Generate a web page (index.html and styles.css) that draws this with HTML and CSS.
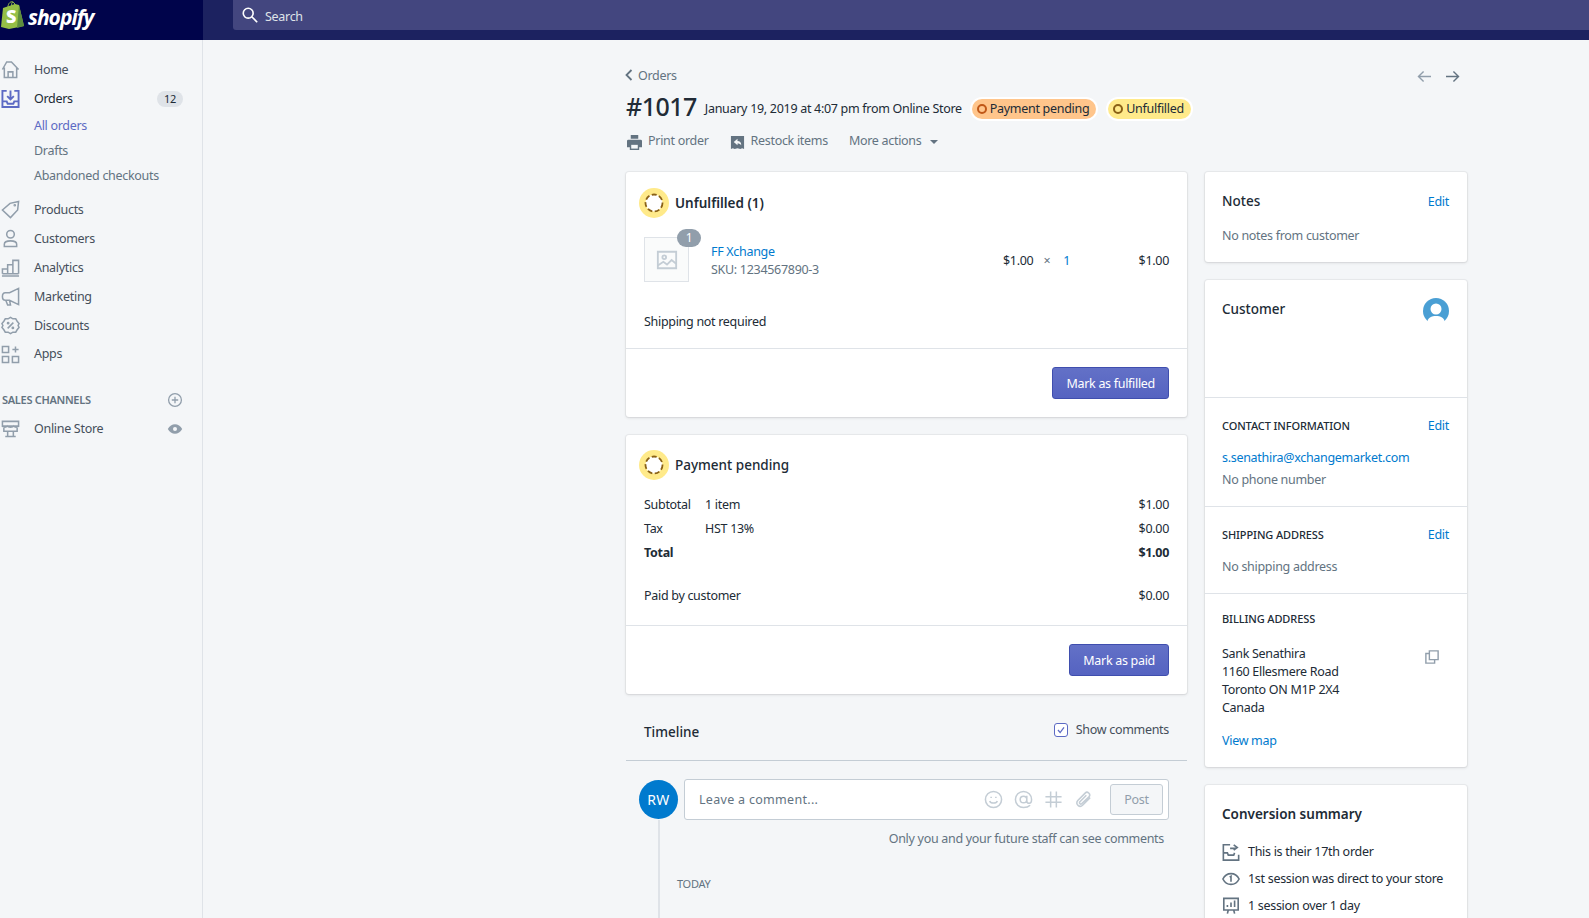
FILE: index.html
```html
<!DOCTYPE html>
<html lang="en">
<head>
  <meta charset="UTF-8" />
  <title>Order #1017</title>
  <link rel="stylesheet" href="styles.css">
</head>
<body>
  <header class="topbar">
    <div class="brand">
      <svg class="bag" viewBox="0 0 24 28">
        <path d="M2 7 L14 3 L18 4 L23 25 L8 28 L0 26 Z" fill="#95bf47"/>
        <path d="M18 4 L23 25 L16 27 Z" fill="#5e8e3e"/>
        <path d="M7 6 C7 2 10 0 12 1 C14 2 14 4 14 6 M11 6 C10 3 11 1 12 1" fill="none" stroke="#95bf47" stroke-width="1"/>
        <text x="5" y="22" class="bag-letter">S</text>
      </svg>
      <span class="wordmark">shopify</span>
    </div>
    <div class="search">
      <svg class="search-icon" viewBox="0 0 20 20"><circle cx="8" cy="8" r="5.5"/><path d="M12 12l6 6"/></svg>
      <span>Search</span>
    </div>
  </header>

  <div class="layout">
    <nav class="sidebar">
      <a class="nav-item">
        <svg class="icon" viewBox="0 0 20 20"><path d="M1.500 10 L6 2h5l7.500 8M3.500 8v10.500h13V8M7.500 18.500v-6h5v6"/></svg>
        Home
      </a>
      <a class="nav-item active">
        <svg class="icon" viewBox="0 0 20 20"><path d="M6 2H1.500v17h17V2H14M1.500 13H6l1 2.500h6l1-2.500h4.500M10 1.500v9M6.500 7.500l3.500 3.500 3.500-3.500"/></svg>
        Orders
        <span class="count">12</span>
      </a>
      <div class="sub-list">
        <a class="sub-item current">All orders</a>
        <a class="sub-item">Drafts</a>
        <a class="sub-item">Abandoned checkouts</a>
      </div>
      <a class="nav-item">
        <svg class="icon" viewBox="0 0 20 20"><path d="M1.500 10.500 L9.500 3.500 L18.500 1.500 L17.500 10.500 L10 18.500Z"/><circle cx="14.500" cy="5.500" r=".6"/></svg>
        Products
      </a>
      <a class="nav-item">
        <svg class="icon" viewBox="0 0 20 20"><circle cx="10" cy="5.500" r="4"/><path d="M3.500 18.500v-2.500c0-2 2-3.500 6.500-3.500s6.500 1.500 6.500 3.500v2.500z"/></svg>
        Customers
      </a>
      <a class="nav-item">
        <svg class="icon" viewBox="0 0 20 20"><path d="M1 19h18M1.500 16.500v-5h5.500v5M7 16.500V7h5.500v9.500M12.500 16.500V2.500h6v14M1.500 16.500h17"/></svg>
        Analytics
      </a>
      <a class="nav-item">
        <svg class="icon" viewBox="0 0 20 20"><path d="M18.500 1.500v17L9 14H4.500C2.500 14 1.500 12 1.500 10s1-4 3-4H9zM5 14l2 5h3l-1-5"/></svg>
        Marketing
      </a>
      <a class="nav-item">
        <svg class="icon" viewBox="0 0 20 20"><path d="M10 1.500l2.500 1.500 3 0 1.500 2.500 2 2.500-1 2 1 2-2 2.500-1.500 2.500-3 0-2.500 1.500-2.500-1.500-3 0L3 14.500 1 12l1-2-1-2 2-2.500L4.500 3l3 0z"/><path d="M7 13l6-6"/><circle cx="7.500" cy="7.500" r=".7"/><circle cx="12.500" cy="12.500" r=".7"/></svg>
        Discounts
      </a>
      <a class="nav-item apps">
        <svg class="icon" viewBox="0 0 20 20"><path d="M1.500 1.500h6.500v6.500H1.500zM1.500 12h6.500v6.500H1.500zM12 12h6.500v6.500H12zM15.250 1.500v6.500M12 4.750h6.500"/></svg>
        Apps
      </a>
      <div class="channels">
        <span>SALES CHANNELS</span>
        <svg class="side-icon" viewBox="0 0 20 20"><circle cx="10" cy="10" r="8"/><path d="M10 6v8M6 10h8"/></svg>
      </div>
      <a class="nav-item">
        <svg class="icon" viewBox="0 0 20 20"><path d="M1.500 2.500h17v5h-17zM3 7.500V13h14V7.500M1.500 7.500c1 1.500 4 1.500 5 0 1 1.500 6 1.500 7 0 1 1.500 4 1.500 5 0M7 13v5.500h6V13M4.500 18.500h11"/></svg>
        Online Store
        <svg class="side-icon eye" viewBox="0 0 20 20"><path d="M1 10c2-4 5.500-6 9-6s7 2 9 6c-2 4-5.500 6-9 6s-7-2-9-6z"/><circle cx="10" cy="10" r="2.500" fill="#f4f6f8" stroke="none"/></svg>
      </a>
    </nav>

    <main class="main">
      <div class="page-head">
        <div class="crumb-row">
          <a class="crumb">
            <svg class="chevron" viewBox="0 0 8 12"><path d="M6.500 1L1.500 6l5 5"/></svg>
            Orders
          </a>
          <div class="pager">
            <svg class="arrow off" viewBox="0 0 16 14"><path d="M15 7H1.500M7 1.500L1.500 7 7 12.500"/></svg>
            <svg class="arrow" viewBox="0 0 16 14"><path d="M1 7h13.500M9 1.500L14.500 7 9 12.500"/></svg>
          </div>
        </div>
        <div class="title-row">
          <h1>#1017</h1>
          <span class="when">January 19, 2019 at 4:07 pm from Online Store</span>
          <span class="badge orange"><i></i>Payment pending</span>
          <span class="badge yellow"><i></i>Unfulfilled</span>
        </div>
        <div class="actions">
          <a class="action print">
            <svg viewBox="0 0 16 16"><path d="M4 0h8v4H4zM1.500 5h13A1.500 1.500 0 0 1 16 6.500V13h-3v3H3v-3H0V6.500A1.500 1.500 0 0 1 1.500 5z"/><path d="M4.500 10.500h7V14.500h-7z" fill="#f4f6f8"/></svg>
            Print order
          </a>
          <a class="action restock">
            <svg viewBox="0 0 16 16"><path d="M1 1h14v14l-2-1-2 1-3-1-3 1-2-1-2 1z"/><path d="M8 4L4 7.500 8 11V9c2 0 3 .5 4 2 0-3-1.500-4.500-4-4.500z" fill="#f4f6f8"/></svg>
            Restock items
          </a>
          <a class="action more">More actions <b class="caret"></b></a>
        </div>
      </div>

      <div class="columns">
        <div class="col-left">
          <section class="card">
            <div class="status-head first">
              <span class="ring"><svg viewBox="0 0 20 20"><circle cx="10" cy="10" r="8.500"/></svg></span>
              <h2>Unfulfilled (1)</h2>
            </div>
            <div class="line-item">
              <div class="thumb">
                <svg viewBox="0 0 24 24"><path d="M2 3h20v18H2z"/><circle cx="9" cy="9" r="2"/><path d="M2 18l6-4 4 3 5-5 5 4"/></svg>
                <span class="qty">1</span>
              </div>
              <div class="item-name">
                <a class="link">FF Xchange</a>
                <span class="muted">SKU: 1234567890-3</span>
              </div>
              <div class="item-price">$1.00 <span class="times">×</span> <a class="link">1</a></div>
              <div class="item-total">$1.00</div>
            </div>
            <p class="shipping-note">Shipping not required</p>
            <div class="card-foot"><button class="primary">Mark as fulfilled</button></div>
          </section>

          <section class="card">
            <div class="status-head second">
              <span class="ring"><svg viewBox="0 0 20 20"><circle cx="10" cy="10" r="8.500"/></svg></span>
              <h2 class="plain">Payment pending</h2>
            </div>
            <div class="totals">
              <div class="total-row"><span class="label">Subtotal</span><span class="detail">1 item</span><span>$1.00</span></div>
              <div class="total-row"><span class="label">Tax</span><span class="detail">HST 13%</span><span>$0.00</span></div>
              <div class="total-row strong"><span class="label">Total</span><span class="detail"></span><span>$1.00</span></div>
              <div class="total-row paid"><span class="label wide">Paid by customer</span><span>$0.00</span></div>
            </div>
            <div class="card-foot"><button class="primary">Mark as paid</button></div>
          </section>

          <section class="timeline">
            <div class="timeline-head">
              <h2 class="plain">Timeline</h2>
              <label class="show-comments">
                <span class="check"><svg viewBox="0 0 14 14"><path d="M3.500 7l2.500 3 4.500-6"/></svg></span>
                Show comments
              </label>
            </div>
            <div class="comment-row">
              <span class="avatar">RW</span>
              <div class="comment-box">
                <span class="placeholder">Leave a comment...</span>
                <svg class="tool" viewBox="0 0 20 20"><circle cx="10" cy="10" r="8.500"/><path d="M6 11.500c1 3 7 3 8 0M7.500 7v1.500M12.500 7v1.500"/></svg>
                <svg class="tool" viewBox="0 0 20 20"><path d="M17 16c-2 2-4 2.500-7 2.500a8.500 8.500 0 1 1 8.500-8.500c0 2.500-1 4-2.500 4s-2.500-1-2.500-2.500V6M13.500 10a3.500 3.500 0 1 1-7 0 3.500 3.500 0 0 1 7 0z"/></svg>
                <svg class="tool" viewBox="0 0 20 20"><path d="M7 1.500v17M13 1.500v17M1.500 7h17M1.500 13h17"/></svg>
                <svg class="tool" viewBox="0 0 20 20"><path d="M17 8l-8 8c-3 3-8-1-5-5l8-8c2-2 6 1 4 4l-8 7.500c-1 1-3-.5-2-2l7-7"/></svg>
                <button class="post">Post</button>
              </div>
            </div>
            <div class="events">
              <p class="comment-note">Only you and your future staff can see comments</p>
              <p class="day">TODAY</p>
            </div>
          </section>
        </div>

        <div class="col-right">
          <section class="card notes">
            <div class="side-title">
              <h2 class="plain">Notes</h2>
              <a class="link edit-low">Edit</a>
            </div>
            <p class="muted notes-text">No notes from customer</p>
          </section>

          <section class="card">
            <div class="cust-top">
              <h2 class="plain">Customer</h2>
              <svg class="cust-avatar" viewBox="0 0 26 26"><circle cx="13" cy="13" r="13" fill="#4a9fd4"/><circle cx="13" cy="11" r="5.500" fill="#fff"/><path d="M4 26c0-7 5-8 9-8s9 1 9 8z" fill="#fff"/></svg>
            </div>
            <div class="cust-section contact">
              <div class="sec-head"><h3>CONTACT INFORMATION</h3><a class="link">Edit</a></div>
              <a class="link email">s.senathira@xchangemarket.com</a>
              <p class="muted phone">No phone number</p>
            </div>
            <div class="cust-section shipping">
              <div class="sec-head"><h3>SHIPPING ADDRESS</h3><a class="link">Edit</a></div>
              <p class="muted email">No shipping address</p>
            </div>
            <div class="cust-section billing">
              <div class="sec-head"><h3>BILLING ADDRESS</h3></div>
              <div class="address">
                <p>Sank Senathira<br>1160 Ellesmere Road<br>Toronto ON M1P 2X4<br>Canada</p>
                <svg class="copy" viewBox="0 0 16 16"><path d="M5 1h10v10H5z"/><path d="M5 4H1v11h10v-4"/></svg>
              </div>
              <a class="link view-map">View map</a>
            </div>
          </section>

          <section class="card summary">
            <h2 class="summary-title">Conversion summary</h2>
            <div class="summary-row">
              <svg viewBox="0 0 20 20"><path d="M9 2H1.500v17h17v-6M1.500 11H6l1 2.500h6l1-2.500M9 6h7M13 2l4 3-4 3"/></svg>
              This is their 17th order
            </div>
            <div class="summary-row">
              <svg viewBox="0 0 20 20"><path d="M1 10c2-4 5.500-6 9-6s7 2 9 6c-2 4-5.500 6-9 6s-7-2-9-6z"/><path d="M8.500 8l1.500-1v6"/></svg>
              1st session was direct to your store
            </div>
            <div class="summary-row">
              <svg viewBox="0 0 20 20"><path d="M2 1.500h16v13H2zM6 18.500l1-4M14 18.500l-1-4M6 11V9M10 11V6M14 11V4"/></svg>
              1 session over 1 day
            </div>
          </section>
        </div>
      </div>
    </main>
  </div>
</body>
</html>
```

FILE: styles.css
```css
* {
  box-sizing: border-box;
}

html, body {
  height: 100%;
  margin: 0;
  overflow: hidden;
}

body {
  font-family: "Noto Sans", sans-serif;
  font-size: 12.5px;
  letter-spacing: -0.3px;
  line-height: 18px;
  color: #212b36;
  background-color: #f4f6f8;
}

h1, h2, h3, p {
  margin: 0;
}

.topbar {
  display: flex;
  height: 40px;
  background-color: #1c2260;
}

.brand {
  display: flex;
  align-items: center;
  width: 203px;
  padding-bottom: 10px;
  background-color: #00044b;
}

.bag {
  width: 24px;
  height: 28px;
  margin-left: 1px;
}

.bag-letter {
  font-family: "Open Sans", sans-serif;
  font-size: 18px;
  font-weight: 800;
  fill: #fff;
}

.wordmark {
  margin-left: 3px;
  margin-top: 3px;
  font-family: "Open Sans", sans-serif;
  font-size: 21px;
  font-weight: 700;
  font-style: italic;
  letter-spacing: -1px;
  color: #fff;
}

.search {
  display: flex;
  align-items: center;
  flex: 1;
  height: 30px;
  margin-left: 30px;
  padding: 4px 0 0 8px;
  color: #dfe3e8;
  background-color: #43467f;
  border-radius: 0 0 0 3px;
}

.search-icon {
  width: 18px;
  height: 18px;
  margin: -4px 6px 0 0;
  fill: none;
  stroke: #fff;
  stroke-width: 1.8;
}

.layout {
  display: flex;
  height: calc(100% - 40px);
}

.sidebar {
  flex: none;
  width: 203px;
  padding-top: 15px;
  border-right: 1px solid #dfe3e8;
}

.nav-item {
  display: flex;
  align-items: center;
  height: 29px;
  padding-right: 19px;
  color: #454f5b;
}

.icon {
  flex: none;
  width: 19px;
  height: 19px;
  margin: 0 14px 0 1px;
  fill: none;
  stroke: #919eab;
  stroke-width: 1.6;
}

.active {
  color: #212b36;
}

.active .icon {
  stroke: #5c6ac4;
  stroke-width: 2;
}

.count {
  margin-left: auto;
  padding: 0 7px;
  font-size: 11px;
  line-height: 16px;
  background-color: #dfe3e8;
  border-radius: 8px;
}

.sub-list {
  margin-bottom: 7px;
}

.sub-item {
  display: block;
  height: 25px;
  padding-left: 34px;
  line-height: 25px;
  color: #637381;
}

.current {
  color: #5c6ac4;
}

.apps {
  height: 28px;
}

.channels {
  display: flex;
  align-items: center;
  justify-content: space-between;
  height: 18px;
  margin-top: 23px;
  margin-bottom: 5px;
  padding: 0 19px 0 2px;
  font-size: 11px;
  font-weight: 600;
  color: #637381;
}

.side-icon {
  width: 16px;
  height: 16px;
  fill: none;
  stroke: #919eab;
  stroke-width: 1.6;
}

.nav-item .side-icon {
  margin-left: auto;
}

.eye {
  fill: #919eab;
  stroke: none;
}

.main {
  flex: 1;
  padding-left: 423px;
}

.page-head {
  width: 842px;
}

.crumb-row {
  display: flex;
  align-items: center;
  justify-content: space-between;
  height: 18px;
  margin-top: 26px;
  padding-right: 8px;
}

.crumb {
  display: flex;
  align-items: center;
  margin-top: 2px;
  color: #637381;
}

.chevron {
  width: 8px;
  height: 12px;
  margin-right: 5px;
  margin-left: -1px;
  margin-top: -3px;
  fill: none;
  stroke: #637381;
  stroke-width: 1.8;
}

.pager {
  display: flex;
  gap: 13px;
  margin-top: 2px;
}

.arrow {
  width: 15px;
  height: 13px;
  fill: none;
  stroke: #637381;
  stroke-width: 1.5;
}

.off {
  stroke: #919eab;
}

.title-row {
  display: flex;
  align-items: center;
  height: 32px;
  margin-top: 6px;
}

h1 {
  font-size: 25px;
  font-weight: 500;
  line-height: 32px;
  letter-spacing: -0.5px;
}

.when {
  margin-left: 8px;
  margin-top: 6px;
}

.badge {
  display: flex;
  align-items: center;
  height: 20px;
  margin-left: 10px;
  margin-top: 6px;
  padding: 0 7px 0 5px;
  border-radius: 10px;
  box-shadow: 0 0 0 2px #fff;
}

.badge i {
  width: 10px;
  height: 10px;
  margin-right: 3px;
  border: 2px solid;
  border-radius: 50%;
}

.orange {
  background-color: #ffc58b;
}

.orange i {
  border-color: #c05717;
}

.yellow {
  margin-left: 12px;
  background-color: #ffea8a;
}

.yellow i {
  border-color: #8a6116;
}

.actions {
  display: flex;
  align-items: center;
  height: 18px;
  margin-top: 10px;
  color: #637381;
}

.action {
  display: flex;
  align-items: center;
}

.action svg {
  width: 15px;
  height: 15px;
  margin: 2px 6px 0 0;
  fill: #637381;
}

.print {
  margin-left: 1px;
}

.restock {
  margin-left: 21px;
}

.more {
  margin-left: 21px;
}

.caret {
  width: 0;
  height: 0;
  margin-top: 2px;
  margin-left: 9px;
  border: 4px solid transparent;
  border-top-color: #637381;
  border-bottom: 0;
}

.columns {
  display: flex;
  gap: 18px;
  width: 842px;
  margin-top: 22px;
}

.col-left {
  flex: none;
  width: 561px;
}

.col-right {
  flex: none;
  width: 262px;
}

.card {
  margin-bottom: 18px;
  background-color: #fff;
  border-radius: 3px;
  box-shadow: 0 0 0 1px rgba(63, 63, 68, 0.05), 0 1px 3px 0 rgba(63, 63, 68, 0.15);
}

.status-head {
  display: flex;
  align-items: center;
  padding-left: 13px;
}

.first {
  padding-top: 16px;
}

.second {
  padding-top: 15px;
}

.ring {
  display: flex;
  align-items: center;
  justify-content: center;
  width: 30px;
  height: 30px;
  margin-right: 6px;
  background-color: #ffea8a;
  border-radius: 50%;
}

.ring svg {
  width: 20px;
  height: 20px;
  fill: #fff;
  stroke: #8a6116;
  stroke-width: 1.8;
  stroke-dasharray: 5 2.500;
}

h2 {
  font-size: 13.5px;
  font-weight: 600;
  line-height: 20px;
  letter-spacing: 0;
}

.plain {
  font-weight: 500;
}

.line-item {
  display: flex;
  align-items: center;
  margin-top: 19px;
  padding: 0 18px;
}

.thumb {
  position: relative;
  display: flex;
  align-items: center;
  justify-content: center;
  width: 45px;
  height: 45px;
  background-color: #fafbfb;
  border: 1px solid #dfe3e8;
}

.thumb svg {
  width: 22px;
  height: 22px;
  fill: none;
  stroke: #c4cdd5;
  stroke-width: 2;
}

.qty {
  position: absolute;
  top: -9px;
  right: -13px;
  width: 24px;
  height: 18px;
  font-size: 12px;
  line-height: 18px;
  text-align: center;
  color: #fff;
  background-color: #919eab;
  border-radius: 9px;
}

.item-name {
  display: flex;
  flex-direction: column;
  width: 292px;
  margin-left: 22px;
  padding-top: 2px;
}

.item-price {
  width: 95px;
  padding-top: 2px;
}

.times {
  margin: 0 10px 0 7px;
  color: #637381;
}

.item-total {
  flex: 1;
  padding-top: 2px;
  text-align: right;
}

.link {
  color: #007ace;
}

.muted {
  color: #637381;
}

.shipping-note {
  margin-top: 31px;
  padding: 0 18px 17px;
}

.card-foot {
  display: flex;
  justify-content: flex-end;
  padding: 18px;
  border-top: 1px solid #dfe3e8;
}

button {
  font-family: inherit;
  font-size: 12.5px;
  letter-spacing: -0.3px;
}

.primary {
  height: 32px;
  padding: 0 13px;
  color: #fff;
  background: linear-gradient(to bottom, #6371c7, #5563c1);
  border: 1px solid #3f4eae;
  border-radius: 3px;
}

.totals {
  margin-top: 13px;
  padding: 0 18px 17px;
}

.total-row {
  display: flex;
  height: 24px;
  line-height: 24px;
}

.label {
  width: 61px;
}

.detail {
  flex: 1;
}

.wide {
  flex: 1;
}

.strong {
  font-weight: 700;
}

.paid {
  margin-top: 19px;
}

.timeline-head {
  display: flex;
  justify-content: space-between;
  height: 49px;
  padding: 9px 18px 0;
  border-bottom: 1px solid #c4cdd5;
}

.timeline-head h2 {
  line-height: 22px;
}

.show-comments {
  display: flex;
  align-items: center;
  height: 18px;
  color: #454f5b;
}

.check {
  display: flex;
  width: 14px;
  height: 14px;
  margin-right: 8px;
  background-color: #fff;
  border: 1px solid #5c6ac4;
  border-radius: 3px;
}

.check svg {
  fill: none;
  stroke: #5c6ac4;
  stroke-width: 1.5;
}

.comment-row {
  display: flex;
  align-items: center;
  gap: 6px;
  margin-top: 18px;
  padding: 0 18px 0 13px;
}

.avatar {
  flex: none;
  width: 39px;
  height: 39px;
  font-size: 14px;
  line-height: 39px;
  text-align: center;
  letter-spacing: 0.5px;
  color: #fff;
  background-color: #007ace;
  border-radius: 50%;
}

.comment-box {
  display: flex;
  align-items: center;
  flex: 1;
  height: 41px;
  padding: 0 5px 0 14px;
  background-color: #fff;
  border: 1px solid #c4cdd5;
  border-radius: 3px;
}

.placeholder {
  flex: 1;
  letter-spacing: 0.3px;
  color: #637381;
}

.tool {
  width: 19px;
  height: 19px;
  margin-right: 11px;
  fill: none;
  stroke: #c4cdd5;
  stroke-width: 1.6;
}

.post {
  width: 53px;
  height: 31px;
  margin-left: 6px;
  color: #919eab;
  background-color: #f4f6f8;
  border: 1px solid #c4cdd5;
  border-radius: 3px;
}

.events {
  height: 120px;
  margin-left: 32px;
  margin-right: 18px;
  padding: 10px 5px 0 17px;
  border-left: 2px solid #dfe3e8;
}

.comment-note {
  text-align: right;
  color: #637381;
}

.day {
  margin-top: 27px;
  font-size: 11px;
  color: #637381;
}

.side-title,
.cust-top,
.sec-head {
  display: flex;
  justify-content: space-between;
}

.notes {
  padding: 19px 18px 17px 17px;
}

.edit-low {
  margin-top: 2px;
}

.notes-text {
  margin-top: 16px;
}

.cust-top {
  height: 117px;
  padding: 19px 18px 0 17px;
}

.cust-avatar {
  width: 26px;
  height: 26px;
  margin-top: -1px;
}

.cust-section {
  padding: 0 18px 17px 17px;
  border-top: 1px solid #dfe3e8;
}

.sec-head {
  line-height: 16px;
}

h3 {
  font-size: 11px;
  font-weight: 500;
  line-height: 16px;
  letter-spacing: -0.1px;
}

.contact {
  padding-top: 20px;
}

.shipping {
  padding-top: 20px;
}

.billing {
  padding-top: 17px;
}

.email {
  display: block;
  margin-top: 15px;
}

.phone {
  margin-top: 4px;
}

.address {
  display: flex;
  justify-content: space-between;
  margin-top: 18px;
}

.copy {
  width: 14px;
  height: 14px;
  margin: 5px 10px 0 0;
  fill: none;
  stroke: #919eab;
  stroke-width: 1.6;
}

.view-map {
  display: block;
  margin-top: 15px;
}

.summary {
  padding: 19px 18px 18px 17px;
}

.summary-title {
  margin-bottom: 14px;
  font-weight: 600;
}

.summary-row {
  display: flex;
  align-items: center;
  height: 27px;
}

.summary-row svg {
  flex: none;
  width: 18px;
  height: 18px;
  margin-right: 8px;
  fill: none;
  stroke: #637381;
  stroke-width: 1.8;
}
```
